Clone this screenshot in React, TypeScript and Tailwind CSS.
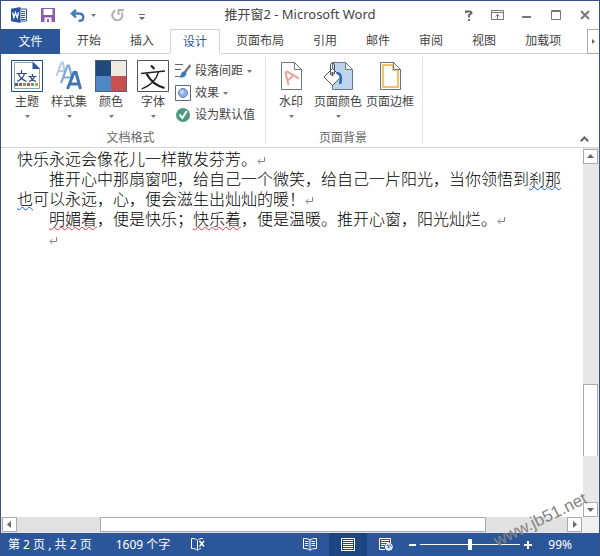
import type { ReactNode } from "react";

const tabs = ["开始", "插入", "设计", "页面布局", "引用", "邮件", "审阅", "视图", "加载项"];

const Caret = () => (
  <svg width="5" height="3" viewBox="0 0 5 3">
    <path d="M0 0h5L2.500 3z" fill="#777" />
  </svg>
);

/* Quick access icons */
const WordIcon = () => (
  <svg width="16" height="16" viewBox="0 0 16 16" className="ml-[10px]">
    <path d="M8.500 2H15.500V14H8.500z" fill="#fff" stroke="#2b579a" />
    <path d="M10 4.500h4M10 6.500h4M10 8.500h4M10 10.500h4M10 12.500h4" stroke="#2b579a" />
    <path d="M0 1.800 9.500 0v16L0 14.200z" fill="#2b579a" />
    <path d="m1.700 5.500 1.200 5 1.600-4.700 1.700 4.700 1.400-5.200" fill="none" stroke="#fff" strokeWidth="1.300" />
  </svg>
);

const SaveIcon = () => (
  <svg width="14" height="14" viewBox="0 0 14 14">
    <path d="M0 0h14v14H0z" fill="#8d5bab" />
    <path d="M2.500 1h9v6h-9zM3.500 9.500h7V14H8V11H6v3H3.500z" fill="#fff" />
  </svg>
);

const UndoIcon = () => (
  <svg width="15" height="13" viewBox="0 0 15 13" fill="none" stroke="#4478b5" strokeWidth="2.400">
    <path d="M6 .8 2 4.500 6 8.300M2 4.500h6.500c3 0 4.800 1.500 4.800 3.800S11.500 12 8.500 12" />
  </svg>
);

const RedoIcon = () => (
  <svg width="13" height="13" viewBox="0 0 13 13" fill="none" stroke="#b4b4b4" strokeWidth="2.200">
    <path d="M4.500 1.600A5 5 0 1 0 10.500 3.500M7.500 6V1.200H13" />
  </svg>
);

/* Ribbon icons */
const ThemeIcon = () => (
  <svg width="32" height="32" viewBox="0 0 32 32">
    <path d="M.5.5h31v31H.5z" fill="#fff" stroke="#1f4e79" />
    <path d="M3.500 2.500h19l6 6v20h-25z" fill="#fff" stroke="#8aa4bf" />
    <path d="M21.500 1.500v7.500h7.500z" fill="#2b579a" />
    <g fill="none" stroke="#2f4d7c" strokeWidth="1.200">
      <path d="M10.500 10v3M5.500 13.500h10.500M13.500 13.500c-1 4-4 6.500-7.500 8M7.500 13.500c1 4 4.500 6.500 8 8" />
      <path d="M21.500 14v2M17.500 16.500h8M23.500 16.500c-.8 2.500-3 4-5.500 5M19 16.500c1 2.500 3.500 4 6 5" />
    </g>
    <path d="M4 23h3v3H4z" fill="#4b5d73" />
    <path d="M8 23h3v3H8z" fill="#c0504d" />
    <path d="M12 23h3v3h-3z" fill="#79a04c" />
    <path d="M16 23h3v3h-3z" fill="#c0504d" />
    <path d="M20 23h3v3h-3z" fill="#4aa5a0" />
    <path d="M24 23h3v3h-3z" fill="#d6a12f" />
  </svg>
);

const StyleSetIcon = () => (
  <svg width="32" height="32" viewBox="0 0 32 32" fill="none">
    <path d="M3.500 16 8.500 2.500h1.500L12 14M5.500 11h6" stroke="#b5cbe4" strokeWidth="2" />
    <path d="M8 23 14.500 5.500H16l3.500 14M11 17.500h7" stroke="#84a9d4" strokeWidth="2.200" />
    <path d="M14.500 29 21 12.500h2L27.500 29M17 24h9.500" stroke="#3f77b5" strokeWidth="3" />
  </svg>
);

const ColorsIcon = () => (
  <svg width="32" height="32" viewBox="0 0 32 32">
    <path d="M0 0h16v16H0z" fill="#1f4a7c" />
    <path d="M16 0h16v16H16z" fill="#eeece1" />
    <path d="M0 16h16v16H0z" fill="#4f87c7" />
    <path d="M16 16h16v16H16z" fill="#c8504f" />
    <path d="M.5.5h31v31H.5z" fill="none" stroke="#4c6078" />
  </svg>
);

const FontsIcon = () => (
  <svg width="32" height="32" viewBox="0 0 32 32">
    <path d="M.5.5h31v31H.5z" fill="#fff" stroke="#555" />
    <g fill="none" stroke="#222">
      <path d="M14 5.500 17.500 9" strokeWidth="2.200" />
      <path d="M4 13.500 28 11" strokeWidth="1.300" />
      <path d="M21.500 12c-2 7.500-8 13.500-17 17" strokeWidth="1.300" />
      <path d="M9.500 13.500c3.500 7 9 12 18 14.500" strokeWidth="2.200" />
    </g>
  </svg>
);

const WatermarkIcon = () => (
  <svg width="32" height="32" viewBox="0 0 32 32" fill="none">
    <path d="M6.500 2.500h13l7 7v20h-20z" fill="#fff" stroke="#6b7a78" />
    <path d="M19.500 2.500v7h7" stroke="#6b7a78" />
    <path d="M13.500 25 10.500 12.500 12 11.500 24 18.500M12.500 20.500l6-5" stroke="#eba8a2" strokeWidth="2.200" />
  </svg>
);

const PageColorIcon = () => (
  <svg width="32" height="32" viewBox="0 0 32 32" fill="none">
    <path d="M10.500 2.500h13l7 7v20h-20z" fill="#bed3ec" stroke="#66788a" />
    <path d="M23.500 2.500v7h7z" fill="#fff" stroke="#66788a" />
    <path d="m10.500 8.500 8.500 8.500-8.500 8.500L2 17z" fill="#fff" stroke="#555" />
    <path d="M8.500 15V5a2 2 0 0 1 4 0v9" stroke="#555" />
    <path d="M10.500 12v4" stroke="#555" strokeWidth="2" />
    <path d="M14.500 13c4 0 5.500 4 3.500 11" stroke="#2b6cb0" strokeWidth="2.500" />
  </svg>
);

const PageBorderIcon = () => (
  <svg width="32" height="32" viewBox="0 0 32 32" fill="none">
    <path d="M6.500 2.500h13l7 7v20h-20z" fill="#fff" stroke="#6b7280" />
    <path d="M9 5h10v5h5v17H9z" stroke="#f0c36a" strokeWidth="2.200" />
    <path d="M19.500 2.500v7h7z" fill="#fff" stroke="#6b7280" />
  </svg>
);

const SpacingIcon = () => (
  <svg width="16" height="16" viewBox="0 0 16 16" fill="none">
    <path d="M0 1.500h8M0 6.500h6M0 13.500h4" stroke="#666" />
    <path d="M15.500 2 10 9" stroke="#777" strokeWidth="2.400" />
    <path d="M10.500 8.500c2 2 .5 4.500-1.500 5.500-2 .8-4 .7-5.500 0 2.500-.5 2-3 3.500-4.700 1-1 2.500-1.300 3.500-.8z" fill="#3d7cba" />
  </svg>
);

const EffectsIcon = () => (
  <svg width="16" height="16" viewBox="0 0 16 16">
    <path d="M.5.5h15v15H.5z" fill="#fff" stroke="#5a6b86" />
    <circle cx="8" cy="8" r="4.500" fill="#8db0e6" stroke="#5c7fc0" />
    <circle cx="7" cy="7" r="2" fill="#c3d7f5" />
  </svg>
);

const DefaultIcon = () => (
  <svg width="16" height="16" viewBox="0 0 16 16">
    <circle cx="8" cy="8" r="7" fill="#4f9a7c" />
    <path d="m4.500 7.500 2.800 3.500 4.500-7" fill="none" stroke="#fff" strokeWidth="2" />
  </svg>
);

/* Status bar icons */
const ProofIcon = () => (
  <svg width="15" height="13" viewBox="0 0 15 13" fill="none" stroke="#fff">
    <path d="M7.500 2.500v10M7.500 2.500C6.500 1 5 .5 1.500.5v10c3 0 5 .5 6 2 .8-1.200 2-1.800 3.500-2M7.500 2.500C8.500 1 10 .5 13 .5" />
    <path d="m9.500 3 4.500 5.500M14 3 9.500 8.500" strokeWidth="1.500" />
  </svg>
);

const ReadIcon = () => (
  <svg width="14" height="13" viewBox="0 0 14 13" fill="none" stroke="#fff">
    <path d="M7 2v10.500M7 2C6 1 4 .5.500.5v10C4 10.500 6 11 7 12.500c1-1.500 3-2 6.500-2V.5C10 .5 8 1 7 2z" />
    <path d="M2 3.500h3.500M2 5.500h3.500M2 7.500h3.500M8.500 3.500H12M8.500 5.500H12M8.500 7.500H12" />
  </svg>
);

const PrintIcon = () => (
  <svg width="14" height="13" viewBox="0 0 14 13" fill="none" stroke="#fff">
    <path d="M.5.5h13v12H.5z" />
    <path d="M2 2.500h10M2 4.500h10M2 6.500h10M2 8.500h10M2 10.500h10" />
  </svg>
);

const WebIcon = () => (
  <svg width="14" height="13" viewBox="0 0 14 13" fill="none" stroke="#fff">
    <path d="M6 11.500H.5V.5h11V5M2 2.500h8M2 4.500h8M2 6.500h4M2 8.500h3" />
    <circle cx="9.800" cy="8.800" r="3.500" fill="#cfdcf0" />
    <path d="M8 7.500 10 8l-.5 2M11 6.500l1.500 2" stroke="#2b579a" />
  </svg>
);

const BigButton = ({ label, icon, arrow = true, wide = false }: { label: string; icon: ReactNode; arrow?: boolean; wide?: boolean }) => (
  <button className={`flex flex-col items-center ${wide ? "w-[52px]" : "w-[42px]"}`}>
    {icon}
    <span className="whitespace-nowrap leading-5">{label}</span>
    <span className="flex h-2 items-center">{arrow && <Caret />}</span>
  </button>
);

const SmallButton = ({ label, icon, arrow = true }: { label: string; icon: ReactNode; arrow?: boolean }) => (
  <button className="flex h-[22px] items-center gap-1 whitespace-nowrap">
    {icon}
    {label}
    {arrow && <Caret />}
  </button>
);

const ScrollButton = ({ label, path }: { label: string; path: string }) => (
  <button aria-label={label} className="flex h-[15px] w-[15px] shrink-0 items-center justify-center border border-[#ababab] bg-white">
    <svg width="7" height="7" viewBox="0 0 7 7">
      <path d={path} fill="#666" />
    </svg>
  </button>
);

const Enter = () => (
  <svg width="8" height="8" viewBox="0 0 8 8" fill="none" stroke="#888" className="inline-block align-baseline">
    <path d="M7.500 0v4.500H1M3.500 2 1 4.500 3.500 7" />
  </svg>
);

const App = () => {
  return (
    <div className="relative flex min-h-screen flex-col overflow-hidden border border-b-0 border-[#3a5088] bg-white font-['Noto_Sans','Noto_Sans_CJK_SC',sans-serif] text-xs text-[#444]">
      {/* Title bar */}
      <header className="flex h-7 items-center">
        <div className="flex flex-1 items-center">
          <WordIcon />
          <button aria-label="保存" className="ml-[14px]"><SaveIcon /></button>
          <button aria-label="撤消" className="ml-[15px] flex items-center gap-[6px]"><UndoIcon /><Caret /></button>
          <button aria-label="恢复" className="ml-[15px]"><RedoIcon /></button>
          <button aria-label="自定义快速访问工具栏" className="ml-[15px] mt-1">
            <svg width="6" height="6" viewBox="0 0 6 6" fill="#666">
              <path d="M0 0h6v1H0zM0 3h6L3 6z" />
            </svg>
          </button>
        </div>
        <h1 className="whitespace-nowrap text-[13px]">推开窗2 - Microsoft Word</h1>
        <div className="flex flex-1 justify-end">
          <button aria-label="帮助" className="flex w-[29px] items-center justify-center">
            <svg width="8" height="11" viewBox="0 0 8 11" fill="none" stroke="#666" strokeWidth="2">
              <path d="M1 3V1.500h4.500L6.500 3 4 5.200V7.500M4 9v2" />
            </svg>
          </button>
          <button aria-label="功能区显示选项" className="flex w-[29px] items-center justify-center">
            <svg width="13" height="10" viewBox="0 0 13 10" fill="none" stroke="#777">
              <path d="M.5.5h12v9H.5zM.5 2.500h12M6.500 9V4.500M4.500 6.500l2-2 2 2" />
            </svg>
          </button>
          <button aria-label="最小化" className="flex w-[29px] items-center justify-center">
            <svg width="9" height="10" viewBox="0 0 9 10"><path d="M0 6h9v2H0z" fill="#777" /></svg>
          </button>
          <button aria-label="最大化" className="flex w-[29px] items-center justify-center">
            <svg width="10" height="10" viewBox="0 0 10 10" fill="none" stroke="#777">
              <path d="M.5.5h9v9H.5zM0 1.500h10" />
            </svg>
          </button>
          <button aria-label="关闭" className="flex w-[29px] items-center justify-center">
            <svg width="10" height="10" viewBox="0 0 10 10" stroke="#777" strokeWidth="2">
              <path d="m1 1 8 8M9 1 1 9" />
            </svg>
          </button>
        </div>
      </header>

      {/* Tabs */}
      <nav className="flex h-[25px]">
        <button className="w-[59px] bg-[#2b579a] text-white">文件</button>
        <div className="flex min-w-0 flex-1 border-b border-[#d5d5d5] pl-1">
          <div className="flex gap-[3px]">
            {tabs.map((tab) => (
              <button
                key={tab}
                className={`whitespace-nowrap border px-3 ${
                  tab === "设计" ? "-mb-px border-[#d5d5d5] border-b-white bg-white text-[#2b579a]" : "border-transparent"
                }`}
              >
                {tab}
              </button>
            ))}
          </div>
        </div>
        <button aria-label="更多选项卡" className="flex w-3 items-center justify-center border border-r-0 border-[#ababab]">
          <svg width="3" height="5" viewBox="0 0 3 5"><path d="M0 0v5l3-2.500z" fill="#666" /></svg>
        </button>
      </nav>

      {/* Ribbon */}
      <section className="flex h-[94px] border-b border-[#d5d5d5] pb-[3px] pt-[3px]">
        <div className="flex flex-col justify-between border-r border-[#e1e1e1] pl-[5px] pr-[10px]">
          <div className="flex pt-[3px]">
            <BigButton label="主题" icon={<ThemeIcon />} />
            <BigButton label="样式集" icon={<StyleSetIcon />} />
            <BigButton label="颜色" icon={<ColorsIcon />} />
            <BigButton label="字体" icon={<FontsIcon />} />
            <div className="ml-px flex flex-col">
              <SmallButton label="段落间距" icon={<SpacingIcon />} />
              <SmallButton label="效果" icon={<EffectsIcon />} />
              <SmallButton label="设为默认值" icon={<DefaultIcon />} arrow={false} />
            </div>
          </div>
          <p className="text-center leading-3 text-[#666]">文档格式</p>
        </div>
        <div className="flex flex-col justify-between border-r border-[#e1e1e1] pl-1 pr-[6px]">
          <div className="flex pt-[3px]">
            <BigButton label="水印" icon={<WatermarkIcon />} />
            <BigButton label="页面颜色" icon={<PageColorIcon />} wide />
            <BigButton label="页面边框" icon={<PageBorderIcon />} arrow={false} wide />
          </div>
          <p className="text-center leading-3 text-[#666]">页面背景</p>
        </div>
        <div className="flex flex-1 items-end justify-end pb-[2px] pr-[10px]">
          <button aria-label="折叠功能区">
            <svg width="9" height="6" viewBox="0 0 9 6" fill="none" stroke="#666" strokeWidth="2" className="block">
              <path d="m.8 5.200 3.700-3.700 3.700 3.700" />
            </svg>
          </button>
        </div>
      </section>

      {/* Document */}
      <div className="flex flex-1">
        <main className="min-w-0 flex-1 pl-4 pr-3 font-['Noto_Sans_CJK_SC',sans-serif] text-base font-light leading-5 text-black">
          <p>快乐永远会像花儿一样散发芬芳。<Enter /></p>
          <p className="indent-8">
            推开心中那扇窗吧，给自己一个微笑，给自己一片阳光，当你领悟到
            <span className="underline decoration-blue-600 decoration-wavy decoration-1">刹那也</span>
            可以永远，心，便会滋生出灿灿的暖！<Enter />
          </p>
          <p className="indent-8">
            <span className="underline decoration-red-500 decoration-wavy decoration-1">明媚着</span>，便是快乐；
            <span className="underline decoration-red-500 decoration-wavy decoration-1">快乐着</span>，便是温暖。推开心窗，阳光灿烂。<Enter />
          </p>
          <p className="pl-8"><Enter /></p>
        </main>
        <div className="flex w-4 flex-col bg-[#e8e8e8] pr-px pt-px">
          <ScrollButton label="向上滚动" path="M0 5h7L3.500 1z" />
          <div className="flex-[221]"></div>
          <div className="flex-[71] border border-b-0 border-[#ababab] bg-white"></div>
          <div className="flex-[46]"></div>
          <ScrollButton label="向下滚动" path="M0 2h7L3.500 6z" />
        </div>
      </div>
      <div className="flex h-4 bg-[#e1e1e1] pl-px">
        <ScrollButton label="向左滚动" path="M5 0v7L1 3.500z" />
        <div className="flex-[83]"></div>
        <div className="h-[15px] flex-[387] border border-[#ababab] bg-white"></div>
        <div className="flex-[81]"></div>
        <ScrollButton label="向右滚动" path="M2 0v7l4-3.500z" />
        <div className="w-[17px] bg-[#f0f0f0]"></div>
      </div>

      {/* Status bar */}
      <footer className="flex h-[23px] items-center bg-[#2b579a] pl-[7px] pr-[27px] text-white">
        <span className="whitespace-nowrap">第 2 页 , 共 2 页</span>
        <span className="ml-6 whitespace-nowrap">1609 个字</span>
        <button aria-label="校对" className="ml-5"><ProofIcon /></button>
        <div className="ml-auto flex h-full items-center">
          <button aria-label="阅读视图" className="flex h-full w-[38px] items-center justify-center"><ReadIcon /></button>
          <button aria-label="页面视图" className="flex h-full w-[38px] items-center justify-center bg-[#1e4583]"><PrintIcon /></button>
          <button aria-label="Web 版式视图" className="flex h-full w-[38px] items-center justify-center"><WebIcon /></button>
        </div>
        <button aria-label="缩小" className="ml-1">
          <svg width="7" height="8" viewBox="0 0 7 8"><path d="M0 3h7v2H0z" fill="#fff" /></svg>
        </button>
        <input
          type="range"
          aria-label="显示比例"
          defaultValue={50}
          className="mx-1 h-3 w-[100px] appearance-none bg-transparent [&::-webkit-slider-runnable-track]:h-px [&::-webkit-slider-runnable-track]:bg-white [&::-webkit-slider-thumb]:-mt-[5px] [&::-webkit-slider-thumb]:h-[11px] [&::-webkit-slider-thumb]:w-1 [&::-webkit-slider-thumb]:appearance-none [&::-webkit-slider-thumb]:bg-white"
        />
        <button aria-label="放大">
          <svg width="8" height="8" viewBox="0 0 8 8"><path d="M0 3h3V0h2v3h3v2H5v3H3V5H0z" fill="#fff" /></svg>
        </button>
        <span className="ml-4">99%</span>
      </footer>

      {/* Site mark over the lower right corner */}
      <span className="pointer-events-none absolute bottom-6 right-2 -rotate-[26deg] font-['Liberation_Sans',sans-serif] text-[17px] leading-6 text-[#858585]">
        www.jb51.net
      </span>
    </div>
  );
};
export default App;
